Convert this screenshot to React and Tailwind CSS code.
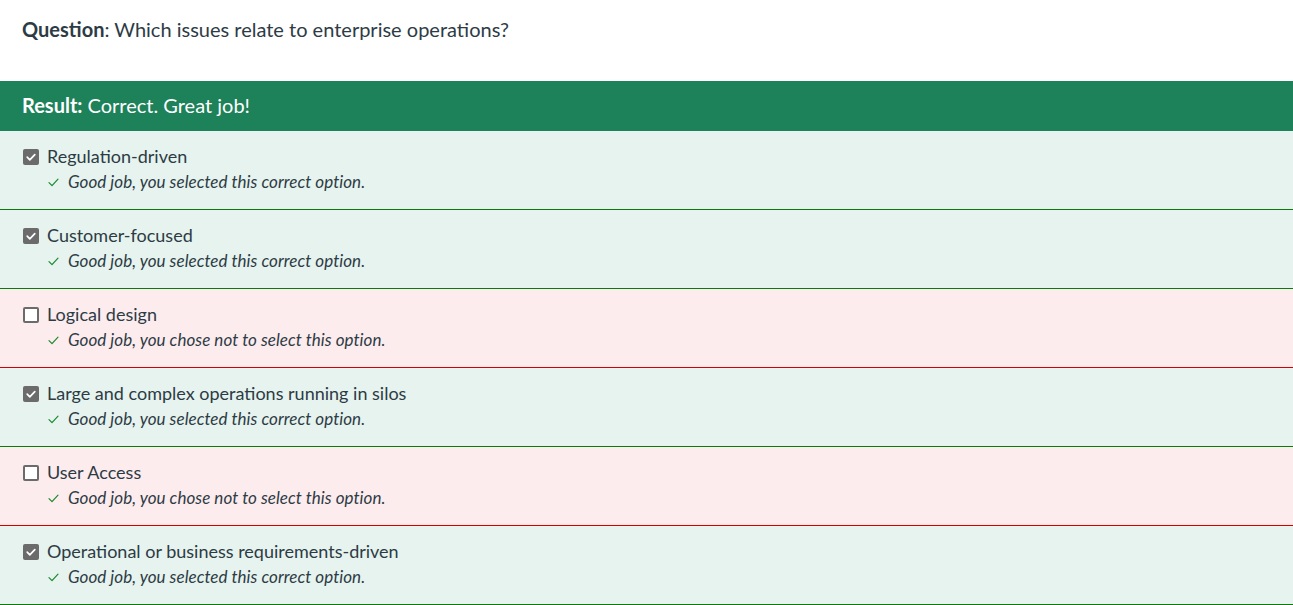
import React from 'react';

const options = [
  { label: 'Regulation-driven', checked: true },
  { label: 'Customer-focused', checked: true },
  { label: 'Logical design', checked: false },
  { label: 'Large and complex operations running in silos', checked: true },
  { label: 'User Access', checked: false },
  { label: 'Operational or business requirements-driven', checked: true },
];

function Box({ checked }) {
  if (checked) {
    return (
      <span className="flex h-[16px] w-[16px] shrink-0 items-center justify-center rounded-[2px] bg-[#6b6b6b]">
        <svg width="12" height="12" viewBox="0 0 12 12" fill="none">
          <path d="M2.2 6.2l2.6 2.6L9.8 3.6" stroke="#fff" strokeWidth="1.7" strokeLinecap="round" strokeLinejoin="round" />
        </svg>
      </span>
    );
  }
  return <span className="block h-[16px] w-[16px] shrink-0 rounded-[2px] border-2 border-[#6b6b6b] bg-white" />;
}

export default function App() {
  return (
    <div className="min-h-[605px] bg-white font-['Lato','Noto_Sans',sans-serif] text-[#2d3b45]">
      {/* Question */}
      <div className="h-[81px] px-[22px] pt-[15px] text-[20px] leading-[28px]">
        <span className="font-bold">Question</span>: Which issues relate to enterprise operations?
      </div>

      {/* Result bar */}
      <div className="flex h-[50px] items-center bg-[#1d8159] px-[22px] pb-[3px] text-[20px] text-white">
        <span className="font-bold">Result:</span>
        <span className="ml-[5px]">Correct. Great job!</span>
      </div>

      {/* Options */}
      {options.map((o) => (
        <div
          key={o.label}
          className={
            o.checked
              ? 'h-[79px] border-b border-[#0b7a0b] bg-[#e6f3ee] pl-[23px] pt-[13px]'
              : 'h-[79px] border-b border-[#d40000] bg-[#fdecee] pl-[23px] pt-[13px]'
          }
        >
          <div className="flex items-center gap-[8px] text-[18px] leading-[25px]">
            <Box checked={o.checked} />
            <span>{o.label}</span>
          </div>
          <div className="mt-[2px] flex items-center pl-[25px] text-[17px] italic leading-[22px]">
            <svg width="11" height="9" viewBox="0 0 11 9" fill="none" className="mr-[9px] shrink-0">
              <path d="M1 4.6l3 3L10 1.2" stroke="#1a8a2e" strokeWidth="1.2" strokeLinecap="round" strokeLinejoin="round" />
            </svg>
            <span className="tracking-[0.05px]">
              {o.checked ? 'Good job, you selected this correct option.' : 'Good job, you chose not to select this option.'}
            </span>
          </div>
        </div>
      ))}
    </div>
  );
}
